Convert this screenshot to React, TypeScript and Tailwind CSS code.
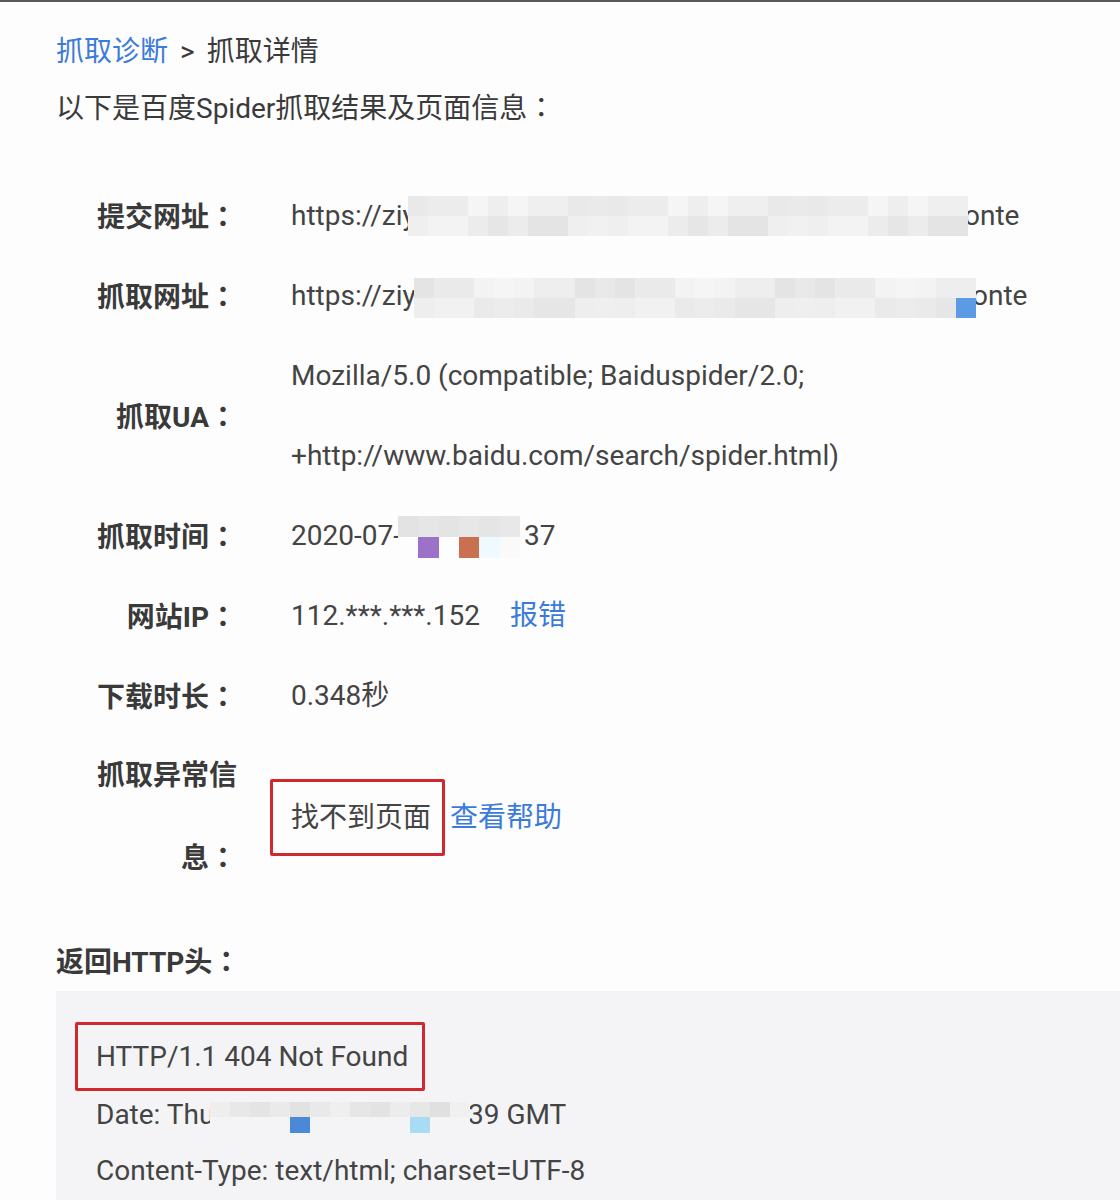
import React from 'react';

const FONT = "font-['Roboto','Noto_Sans_CJK_SC',sans-serif]";

// full-width colon centred in its cell, like the screenshot's font
const Colon = () => <span className="font-['Noto_Sans_CJK_TC',sans-serif]">：</span>;

// pixelated patch that hides part of a value
function Mosaic({ top, bottom, w, h, cls = '' }: { top: string[]; bottom: string[]; w: number; h: number; cls?: string }) {
  const cell = w / top.length;
  return (
    <span className={`relative z-10 inline-flex shrink-0 flex-col align-middle ${cls}`} style={{ width: w, height: h }}>
      <span className="flex flex-1">
        {top.map((c, i) => (
          <span key={i} className="h-full" style={{ width: cell, background: c }} />
        ))}
      </span>
      <span className="flex flex-1">
        {bottom.map((c, i) => (
          <span key={i} className="h-full" style={{ width: cell, background: c }} />
        ))}
      </span>
    </span>
  );
}

const grays = ['#f1f1f1', '#ececec', '#eeeeee', '#e9e9e9', '#f3f3f3', '#e6e6e6', '#efefef', '#eaeaea', '#f5f5f5', '#e4e4e4'];
const pick = (n: number, seed: number) => Array.from({ length: n }, (_, i) => grays[(i * 7 + seed * 3 + ((i * i) % 5)) % grays.length]);

function Row({ label, children, tall }: { label: React.ReactNode; children: React.ReactNode; tall?: boolean }) {
  return (
    <div className={`flex items-center ${tall ? 'min-h-[160px]' : 'h-[80px]'}`}>
      <div className="w-[142px] shrink-0 text-right font-bold text-[#3a3a3a] leading-[80px] text-[28px]">{label}</div>
      <div className="pl-[54px] text-[28px] text-[#444] whitespace-nowrap">{children}</div>
    </div>
  );
}

export default function App() {
  return (
    <div className={`w-[1120px] h-[1200px] overflow-hidden bg-[#fdfdfd] ${FONT}`}>
      <div className="h-[2px] bg-[#5a5a5a]" />
      <div className="pl-[56px]">
        <div className="pt-[31px] text-[28px] leading-[38px] text-[#3a3a3a]">
          <span className="text-[#3b7bdb]">抓取诊断</span>
          <span className="mx-[12px]">&gt;</span>
          <span>抓取详情</span>
        </div>
        <div className="mt-[16px] text-[28px] leading-[38px] text-[#3a3a3a]">
          以下是百度Spider抓取结果及页面信息<Colon />
        </div>

        <div className="mt-[48px] pl-[39px]">
          <Row label={<>提交网址<Colon /></>}>
            <span className="inline-flex items-center h-[40px]">
              <span className="inline-block w-[117px] shrink-0">https://ziy</span>
              <Mosaic top={pick(28, 1)} bottom={pick(28, 2)} w={560} h={40} />
              <span className="-ml-[4px]">onte</span>
            </span>
          </Row>
          <Row label={<>抓取网址<Colon /></>}>
            <span className="inline-flex items-center h-[40px]">
              <span className="inline-block w-[123px] shrink-0">https://ziy</span>
              <Mosaic top={pick(28, 3)} bottom={[...pick(27, 4), '#5b9be6']} w={562} h={40} cls="mt-[4px]" />
              <span className="-ml-[4px]">onte</span>
            </span>
          </Row>
          <Row label={<>抓取UA<Colon /></>} tall>
            <div className="leading-[80px]">
              <div>Mozilla/5.0 (compatible; Baiduspider/2.0;</div>
              <div>+http://www.baidu.com/search/spider.html)</div>
            </div>
          </Row>
          <Row label={<>抓取时间<Colon /></>}>
            <span className="inline-flex items-center h-[42px]">
              <span className="inline-block w-[107px] shrink-0">2020-07-</span>
              <Mosaic
                top={['#e3e3e3', '#e6e6e6', '#e4e4e4', '#e7e7e7', '#e5e5e5', '#e8e8e8']}
                bottom={['#fdfdfd', '#9b72c8', '#fdfdfd', '#c8704f', '#eefaff', '#fafafa']}
                w={122}
                h={42}
                cls="mt-[2px]"
              />
              <span className="ml-[4px]">37</span>
            </span>
          </Row>
          <Row label={<>网站IP<Colon /></>}>
            112.***.***.152<span className="ml-[30px] text-[#3b7bdb]">报错</span>
          </Row>
          <Row label={<>下载时长<Colon /></>}>0.348秒</Row>
          <Row label={<>抓取异常信息<Colon /></>} tall>
            <div className="-ml-[21px] flex items-center">
              <span className="flex h-[77px] items-center border-[3px] border-[#d0282e] pl-[18px] pr-[11px] rounded-[2px]">找不到页面</span>
              <span className="ml-[5px] text-[#3b7bdb]">查看帮助</span>
            </div>
          </Row>
        </div>

        <div className="mt-[42px] text-[28px] font-bold leading-[38px] text-[#3a3a3a]">
          返回HTTP头<Colon />
        </div>
        <div className="mt-[9px] h-[300px] bg-[#f4f4f6] pl-[19px] pt-[31px] text-[28px] text-[#444]">
          <div className="flex h-[69px] w-[350px] items-center border-[3px] border-[#d0282e] pl-[18px] rounded-[2px]">HTTP/1.1 404 Not Found</div>
          <div className="-mt-[4px] pl-[21px] leading-[56px] whitespace-nowrap">
            <div className="flex h-[56px] items-center">
              <span className="inline-block w-[114px] shrink-0">Date: Thu</span>
              <Mosaic
                top={['#eeeeee', '#e8e8e8', '#e4e4e4', '#eaeaea', '#e2e2e2', '#e9e9e9', '#efefef', '#e6e6e6', '#e3e3e3', '#ececec', '#e7e7e7', '#e0e0e0', '#f0f0f0']}
                bottom={['#f4f4f6', '#f4f4f6', '#f4f4f6', '#f4f4f6', '#4a88d8', '#f4f4f6', '#f4f4f6', '#f4f4f6', '#f4f4f6', '#f4f4f6', '#a8dcf5', '#f4f4f6', '#f4f4f6']}
                w={260}
                h={31}
                cls="mt-[4px]"
              />
              <span className="-ml-[2px]">39 GMT</span>
            </div>
            <div>Content-Type: text/html; charset=UTF-8</div>
          </div>
        </div>
      </div>
    </div>
  );
}
